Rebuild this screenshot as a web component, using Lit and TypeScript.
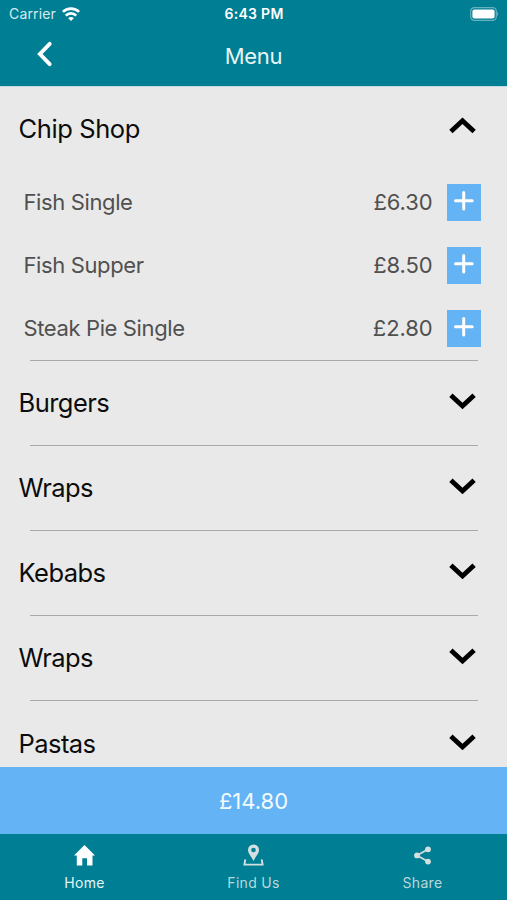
import { LitElement, html, svg, css } from "lit";
import { customElement } from "lit/decorators.js";

interface Item { name: string; price: string; }
interface Category { name: string; items?: Item[]; }

const categories: Category[] = [
  {
    name: "Chip Shop",
    items: [
      { name: "Fish Single", price: "£6.30" },
      { name: "Fish Supper", price: "£8.50" },
      { name: "Steak Pie Single", price: "£2.80" },
    ],
  },
  { name: "Burgers" },
  { name: "Wraps" },
  { name: "Kebabs" },
  { name: "Wraps" },
  { name: "Pastas" },
];

const homeIcon = svg`<path fill="currentColor" d="M11.5 1 L22 11.4 H19.5 V21.5 H14 V14.3 H9.3 V21.5 H3.8 V11.4 H1 Z"/>`;
const findIcon = svg`
  <path fill="currentColor" fill-rule="evenodd" d="M11.5 .5 A5.5 5.5 0 0 1 17 6 C17 9.6 13.2 13 11.5 17 C9.8 13 6 9.6 6 6 A5.5 5.5 0 0 1 11.5 .5 Z M11.5 3.7 A2.3 2.3 0 1 0 11.5 8.3 A2.3 2.3 0 1 0 11.5 3.7 Z"/>
  <path fill="none" stroke="currentColor" stroke-width="1.9" d="M3.3 15.4 L2.4 20.6 H20.6 L19.7 15.4"/>`;
const shareIcon = svg`
  <path fill="none" stroke="currentColor" stroke-width="1.7" d="M17 5.3 L6 11.4 L17 17.6"/>
  <circle cx="6" cy="11.4" r="2.9" fill="currentColor"/>
  <circle cx="17" cy="5.3" r="2.9" fill="currentColor"/>
  <circle cx="17" cy="17.6" r="2.9" fill="currentColor"/>`;

@customElement("app-root")
export class AppRoot extends LitElement {
  static styles = css`
    :host {
      display: flex;
      flex-direction: column;
      height: 900px;
      overflow: hidden;
      background: #e9e9e9;
      font-family: Inter, "Liberation Sans", sans-serif;
    }
    svg { display: block; flex: none; }
    .top { flex: none; background: #007e94; color: #fff; height: 87px; border-bottom: 1px solid #c4dce0; box-sizing: border-box; }
    .status { display: grid; grid-template-columns: 1fr auto 1fr; align-items: center; height: 27px; padding: 0 8px 0 9px; }
    .carrier { display: flex; align-items: center; gap: 6px; font-size: 14px; letter-spacing: 0.15px; color: #d6edf0; }
    .clock { font-size: 14px; font-weight: 600; letter-spacing: 0.3px; }
    .battery { justify-self: end; }
    .nav { display: grid; grid-template-columns: 1fr auto 1fr; align-items: center; height: 57px; padding: 0 36px; }
    .title { font-size: 22px; letter-spacing: -0.35px; color: #e6f5f6; }
    .back { margin-top: -3px; }
    .list { flex: 1; min-height: 0; overflow: hidden; }
    .category { height: 85.2px; display: flex; align-items: center; justify-content: space-between; padding: 0 31px 0 18.5px; font-size: 25.5px; letter-spacing: -0.55px; color: #0c0c0c; box-sizing: border-box; }
    .category.open { height: 82.2px; letter-spacing: -0.4px; }
    .arrow { margin-top: -2px; }
    .open .arrow { margin-top: -6px; }
    .items { height: 188.5px; padding-top: 2px; }
    .item { display: flex; align-items: center; height: 63px; padding: 0 26px 0 23.5px; color: #505050; font-size: 22px; letter-spacing: -0.38px; }
    .label { margin-top: -2px; }
    .price { margin-top: -2px; margin-left: auto; margin-right: 14.5px; letter-spacing: -0.1px; }
    .add { width: 34px; height: 37px; display: grid; place-items: center; background: #64b3f5; padding: 0 0 3px; border: 0; box-sizing: border-box; }
    .divider { height: 1px; margin: 0 29px -1px 30px; background: #a9a9a9; }
    .total { flex: none; height: 67px; display: grid; place-items: center; background: #64b3f5; color: #f4fbff; font-size: 22px; }
    .tabs { flex: none; height: 66px; display: grid; grid-template-columns: repeat(3, 1fr); background: #007e94; }
    .tab { display: flex; flex-direction: column; align-items: center; padding-top: 10px; gap: 7px; color: #b9d8da; font-size: 14px; line-height: 18px; letter-spacing: 0.3px; }
    .tab.active { color: #e2f6f6; }
    .tab svg { color: #d3e0df; }
    .tab.active svg { color: #fff; }
  `;

  private category(c: Category, index: number) {
    return html`
      ${index ? html`<div class="divider"></div>` : null}
      <div class="category ${c.items ? "open" : ""}">
        <span>${c.name}</span>
        <svg class="arrow" width="27" height="17" viewBox="0 0 27 17">
          <path fill="none" stroke="#000" stroke-width="4.8" d=${c.items ? "M1.9 14.6 L13.5 3.8 L25.1 14.6" : "M1.9 2.2 L13.5 13 L25.1 2.2"} />
        </svg>
      </div>
      ${c.items
        ? html`<div class="items">${c.items.map(
            (item) => html`<div class="item">
              <span class="label">${item.name}</span><span class="price">${item.price}</span>
              <button class="add" aria-label="Add">
                <svg width="20" height="20" viewBox="0 0 20 20"><path fill="none" stroke="#fff" stroke-width="3" stroke-linecap="round" d="M9.7 1.5 V18 M1.5 9.7 H18.2" /></svg>
              </button>
            </div>`
          )}</div>`
        : null}`;
  }

  private tab(label: string, icon: unknown, active = false) {
    return html`<div class="tab ${active ? "active" : ""}">
      <svg width="23" height="23" viewBox="0 0 23 23">${icon}</svg>
      <span>${label}</span>
    </div>`;
  }

  render() {
    return html`
      <header class="top">
        <div class="status">
          <div class="carrier">
            <span>Carrier</span>
            <svg width="18" height="14" viewBox="0 0 18 14">
              <g fill="none" stroke="#fff" stroke-width="2.7">
                <path d="M.9 4.9 A11.6 11.6 0 0 1 17.1 4.9" />
                <path d="M3.8 8.6 A7.2 7.2 0 0 1 14.2 8.6" />
              </g>
              <path fill="#fff" d="M9 13.9 L6.2 11.2 A3.8 3.8 0 0 1 11.8 11.2 Z" />
            </svg>
          </div>
          <span class="clock">6:43 PM</span>
          <svg class="battery" width="29" height="14" viewBox="0 0 29 14">
            <rect x=".7" y=".7" width="25.6" height="12.6" rx="3.6" fill="none" stroke="#68b2bf" stroke-width="1.2" />
            <rect x="2.4" y="2.4" width="22.2" height="9.2" rx="2" fill="#fff" />
            <path d="M27.2 4.8 Q29.2 7 27.2 9.2 Z" fill="#68b2bf" />
          </svg>
        </div>
        <div class="nav">
          <svg class="back" width="17" height="26" viewBox="0 0 17 26">
            <path d="M13.7 2.9 L3.9 13 L13.7 23.1" fill="none" stroke="#fff" stroke-width="3.9" stroke-linecap="round" />
          </svg>
          <span class="title">Menu</span>
        </div>
      </header>
      <main class="list">${categories.map((c, i) => this.category(c, i))}</main>
      <div class="total">£14.80</div>
      <nav class="tabs">
        ${this.tab("Home", homeIcon, true)} ${this.tab("Find Us", findIcon)} ${this.tab("Share", shareIcon)}
      </nav>`;
  }
}
